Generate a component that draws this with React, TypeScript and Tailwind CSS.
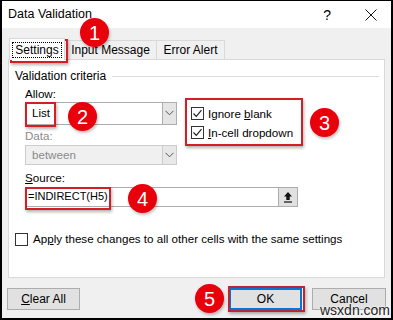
import React from "react";

const Badge: React.FC<{ n: string; className: string }> = ({ n, className }) => (
  <div
    className={`absolute w-[29px] h-[29px] rounded-full bg-[#e8000b] text-white flex items-center justify-center text-[20px] leading-none shadow-[1px_2px_3px_rgba(0,0,0,0.25)] ${className}`}
  >
    {n}
  </div>
);

const Check: React.FC<{ checked?: boolean }> = ({ checked }) => (
  <div className="w-[13px] h-[13px] border border-[#333] bg-white flex items-center justify-center">
    {checked && (
      <svg width="11" height="11" viewBox="0 0 11 11">
        <path d="M1.5 5.5 L4.3 8.3 L9.5 2.2" fill="none" stroke="#222" strokeWidth="1.2" />
      </svg>
    )}
  </div>
);

const Chevron: React.FC = () => (
  <svg width="9" height="6" viewBox="0 0 9 6">
    <path d="M0.5 0.8 L4.5 4.8 L8.5 0.8" fill="none" stroke="#555" strokeWidth="1" />
  </svg>
);

const App: React.FC = () => {
  return (
    <div
      className="relative w-[393px] h-[320px] overflow-hidden bg-[#f0f0f0] border-x-2 border-b-2 border-t border-black text-[11.6px] text-[#000] leading-none"
      style={{ fontFamily: '"Liberation Sans", Arial, sans-serif' }}
    >
      {/* title bar */}
      <div className="h-[27px] bg-white flex items-center pl-[6px] pr-[14px]">
        <span className="text-[12.5px]">Data Validation</span>
        <span className="ml-auto text-[14px]">?</span>
        <svg className="ml-[34px]" width="12" height="12" viewBox="0 0 12 12">
          <path d="M0.5 0.5 L11.5 11.5 M11.5 0.5 L0.5 11.5" stroke="#111" strokeWidth="1" />
        </svg>
      </div>

      {/* tabs */}
      <div className="flex items-end h-[31px] pl-[7px]">
        <div className="relative z-10 h-[22px] w-[56px] bg-white border border-[#d9d9d9] border-b-0 -mb-px flex items-center justify-center">
          <span className="px-[2px] py-[1px] border border-dotted border-black text-[12px]">Settings</span>
        </div>
        <div className="h-[19px] w-[92px] border border-[#d9d9d9] border-b-0 border-l-0 flex items-center justify-center text-[12px]">
          Input Message
        </div>
        <div className="h-[19px] w-[68px] border border-[#d9d9d9] border-b-0 border-l-0 flex items-center justify-center text-[12px]">
          Error Alert
        </div>
      </div>

      {/* panel */}
      <div className="ml-[6px] mr-[6px] h-[219px] bg-white border border-[#d9d9d9] pl-[6px] pr-[5px] pt-[10px]">
        <div className="flex items-center gap-[6px]">
          <span className="text-[12px]">Validation criteria</span>
          <div className="flex-1 h-px bg-[#dcdcdc]" />
        </div>

        <div className="flex pl-[10px] mt-[6px]">
          <div className="w-[152px]">
            <div>Allow:</div>
            <div className="mt-[2px] h-[23px] border border-[#adadad] flex">
              <div className="flex-1 flex items-center pl-[6px]">List</div>
              <div className="w-[14px] bg-[#e5e5e5] border-l border-[#adadad] flex items-center justify-center">
                <Chevron />
              </div>
            </div>
            <div className="mt-[5px] text-[#8a8a8a]">Data:</div>
            <div className="mt-[4px] h-[20px] border border-[#cccccc] bg-[#f0f0f0] flex">
              <div className="flex-1 flex items-center pl-[6px] text-[#8a8a8a]">between</div>
              <div className="w-[14px] bg-[#e8e8e8] border-l border-[#cccccc] flex items-center justify-center">
                <Chevron />
              </div>
            </div>
          </div>
          <div className="ml-[14px] mt-[19px] flex flex-col gap-[6px]">
            <div className="flex items-center gap-[4px]">
              <Check checked />
              <span>
                Ignore <span className="underline">b</span>lank
              </span>
            </div>
            <div className="flex items-center gap-[4px]">
              <Check checked />
              <span>
                <span className="underline">I</span>n-cell dropdown
              </span>
            </div>
          </div>
        </div>

        <div className="pl-[10px] mt-[7px]">
          <div>
            <span className="underline">S</span>ource:
          </div>
          <div className="mt-[3px] w-[273px] h-[20px] border border-[#adadad] flex">
            <div className="flex-1 flex items-center pl-[2px] text-[11px]">=INDIRECT(H5)</div>
            <div className="w-[19px] bg-[#e1e1e1] border-l border-[#adadad] flex items-center justify-center">
              <svg width="10" height="12" viewBox="0 0 10 12">
                <path d="M5 1 L1 5.5 H3.3 V9 H6.7 V5.5 H9 Z" fill="#111" />
                <path d="M1 11 H9" stroke="#111" strokeWidth="1.2" />
              </svg>
            </div>
          </div>
        </div>

        <div className="flex items-center gap-[5px] mt-[26px]">
          <Check />
          <span>
            Ap<span className="underline">p</span>ly these changes to all other cells with the same settings
          </span>
        </div>
      </div>

      {/* buttons */}
      <div className="flex items-center px-[5px] mt-[10px] text-[12px]">
        <div className="w-[73px] h-[22px] bg-[#e1e1e1] border border-[#adadad] flex items-center justify-center">
          <span>
            <span className="underline">C</span>lear All
          </span>
        </div>
        <div className="ml-auto w-[73px] h-[22px] bg-[#e1e1e1] border-2 border-[#0078d7] flex items-center justify-center">
          OK
        </div>
        <div className="ml-[10px] w-[74px] h-[22px] bg-[#e1e1e1] border border-[#adadad] flex items-center justify-center">
          Cancel
        </div>
      </div>

      {/* annotation boxes */}
      <div className="absolute left-[8px] top-[38px] w-[58px] h-[24px] border-2 border-[#d21f26] shadow-[1px_2px_3px_rgba(0,0,0,0.3)]" />
      <div className="absolute left-[23px] top-[101px] w-[31px] h-[25px] border-2 border-[#d21f26] shadow-[1px_2px_3px_rgba(0,0,0,0.3)]" />
      <div className="absolute left-[183px] top-[97px] w-[118px] h-[48px] border-2 border-[#d21f26] shadow-[1px_2px_3px_rgba(0,0,0,0.3)]" />
      <div className="absolute left-[23px] top-[186px] w-[86px] h-[23px] border-2 border-[#d21f26] shadow-[1px_2px_3px_rgba(0,0,0,0.3)]" />
      <div className="absolute left-[226px] top-[285px] w-[77px] h-[26px] border-2 border-[#b8263a] shadow-[1px_2px_3px_rgba(0,0,0,0.3)]" />

      <Badge n="1" className="left-[78px] top-[17px]" />
      <Badge n="2" className="left-[66px] top-[101px]" />
      <Badge n="3" className="left-[308px] top-[107px]" />
      <Badge n="4" className="left-[126px] top-[183px]" />
      <Badge n="5" className="left-[193px] top-[283px]" />

      <div
        className="absolute left-[318px] top-[302px] text-[14px] text-[#222]"
        style={{ textShadow: "0 0 2px #fff, 0 0 2px #fff" }}
      >
        wsxdn.com
      </div>
    </div>
  );
};

export default App;
